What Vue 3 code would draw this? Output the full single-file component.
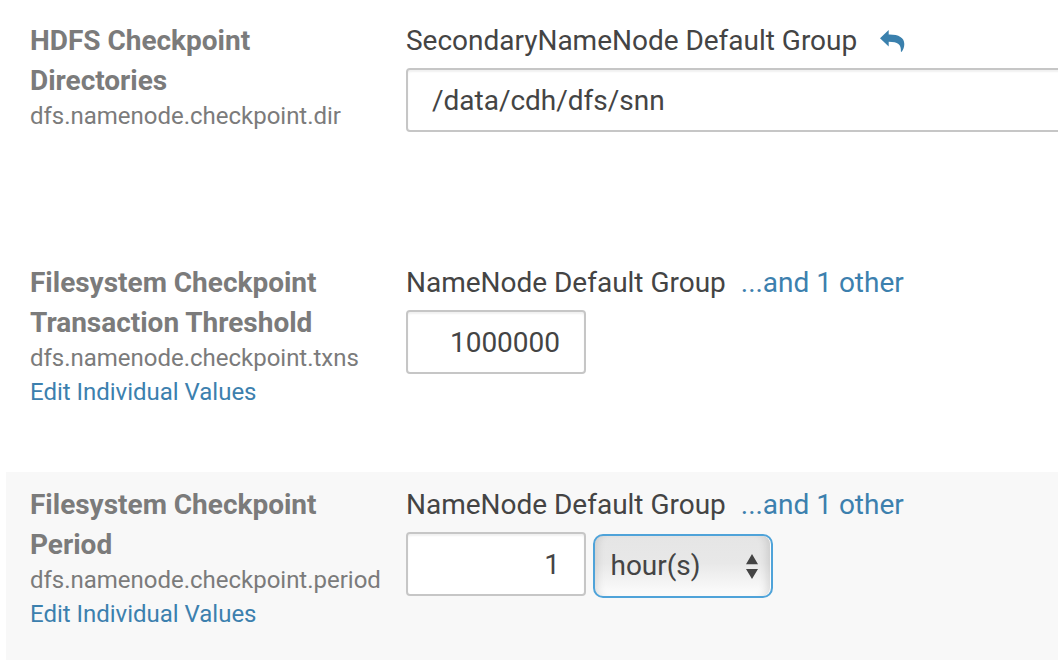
<script setup>
const rows = [
  { id: 'dir', title: ['HDFS Checkpoint', 'Directories'], prop: 'dfs.namenode.checkpoint.dir', group: 'SecondaryNameNode Default Group', undo: true, value: '/data/cdh/dfs/snn' },
  { id: 'txns', title: ['Filesystem Checkpoint', 'Transaction Threshold'], prop: 'dfs.namenode.checkpoint.txns', edit: true, group: 'NameNode Default Group', value: '1000000' },
  { id: 'period', title: ['Filesystem Checkpoint', 'Period'], prop: 'dfs.namenode.checkpoint.period', edit: true, group: 'NameNode Default Group', value: '1', unit: 'hour(s)' }
]
</script>

<template>
  <main class="page">
    <section v-for="row in rows" :key="row.id" class="row" :class="row.id">
      <div class="label">
        <div v-for="line in row.title" :key="line" class="title">{{ line }}</div>
        <div class="prop">{{ row.prop }}</div>
        <a v-if="row.edit" class="link edit">Edit Individual Values</a>
      </div>
      <div class="content">
        <div class="group">
          <span class="name">{{ row.group }}</span>
          <svg v-if="row.undo" class="undo" width="25" height="22" viewBox="0 0 25 22">
            <path d="M0 8.300 8.700 0V4.500C18.500 4.300 24.300 7.500 24.300 14C24.300 17 23.300 19.500 21.800 21.700C21.300 22 20.800 21.800 20.900 21.200C21.300 14.500 18 11.700 8.700 11.700V16.400Z" />
          </svg>
          <a v-if="row.edit" class="link other">...and 1 other</a>
        </div>
        <div class="controls">
          <div class="input" :class="{ wide: row.undo }">{{ row.value }}</div>
          <div v-if="row.unit" class="select">
            <span>{{ row.unit }}</span>
            <svg width="12" height="25" viewBox="0 0 12 25"><path d="M0 10.300 6 0 12 10.300ZM0 15H12L6 25Z" /></svg>
          </div>
        </div>
      </div>
    </section>
  </main>
</template>

<style>
body { margin: 0; background: #fff; }
</style>

<style scoped>
.page { width: 1058px; height: 670px; overflow: hidden; box-sizing: border-box; padding: 8px 0 0 6px; font-family: Roboto, sans-serif; letter-spacing: -0.015px; }
.row { display: flex; box-sizing: border-box; padding: 13px 0 0 24px; white-space: nowrap; }
.dir { height: 242px; }
.txns { height: 222px; }
.period { height: 188px; background: #f8f8f8; }
.label { width: 376px; flex: none; color: #7b7b7b; }
.title { font-size: 28px; line-height: 40px; font-weight: 700; }
.prop { font-size: 24px; line-height: 34px; margin-top: -2px; }
.link { color: #3c80ae; }
.edit { display: block; font-size: 24px; line-height: 34px; }
.content { flex: none; }
.group { display: flex; align-items: center; height: 40px; font-size: 28px; line-height: 40px; color: #444; }
.undo { margin-left: 23px; fill: #3a80ad; }
.other { margin-left: 15px; }
.controls { display: flex; margin-top: 7px; }
.input { box-sizing: border-box; width: 180px; height: 64px; border: 2px solid #c6c6c6; border-radius: 4px; background: #fff; box-shadow: inset 0 2px 2px rgba(0, 0, 0, .06); padding: 1px 24px 0; font-size: 28px; line-height: 60px; color: #444; text-align: right; }
.wide { width: 720px; text-align: left; }
.select { box-sizing: border-box; display: flex; align-items: center; justify-content: space-between; width: 180px; height: 64px; margin: 2px 0 0 7px; padding: 0 13.500px 0 15.500px; border: 2px solid #4fa3d9; border-radius: 10px; background: linear-gradient(#e5e5e5 0, #e8e8e8 45%, #fdfdfd 100%); box-shadow: inset -1px 0 0 rgba(255, 255, 255, .9), inset 8px 0 8px -6px rgba(0, 0, 0, .12), inset -10px 0 8px -6px rgba(0, 0, 0, .12); font-size: 28px; line-height: 40px; color: #444; }
.select svg { fill: #444; }
</style>
